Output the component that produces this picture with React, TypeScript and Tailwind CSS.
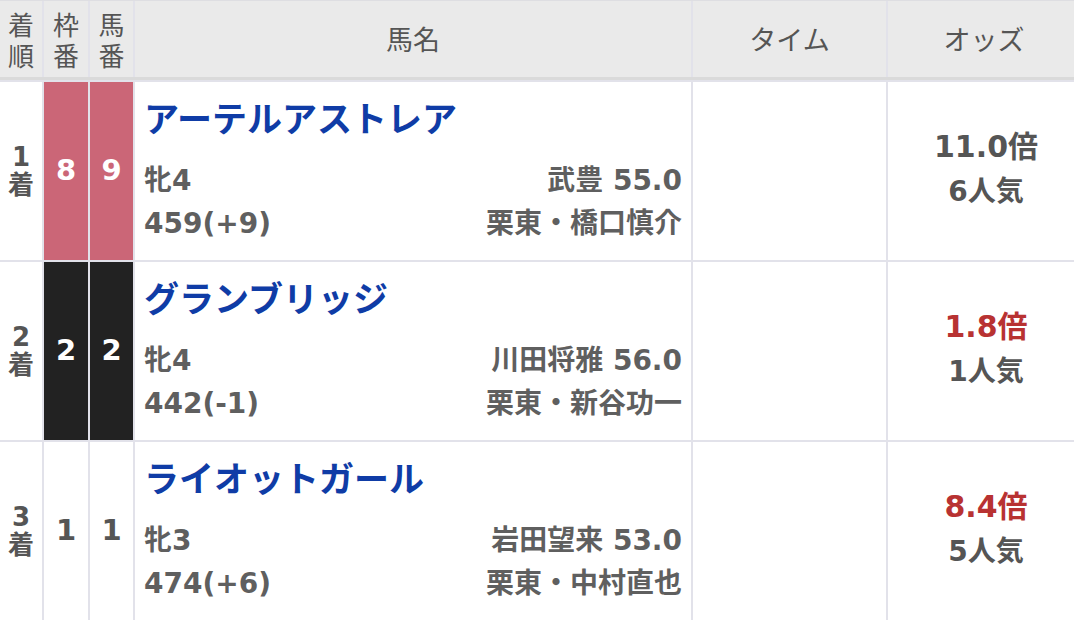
import React from "react";

type Row = {
  rank: string;
  waku: string;
  uma: string;
  wakuBg: string;
  wakuText: string;
  name: string;
  sexAge: string;
  weight: string;
  jockey: string;
  stable: string;
  trainer: string;
  odds: string;
  pop: string;
  red: boolean;
};

const rows: Row[] = [
  {
    rank: "1",
    waku: "8",
    uma: "9",
    wakuBg: "bg-[#cb6677]",
    wakuText: "text-white",
    name: "アーテルアストレア",
    sexAge: "牝4",
    weight: "459(+9)",
    jockey: "武豊 55.0",
    stable: "栗東",
    trainer: "橋口慎介",
    odds: "11.0倍",
    pop: "6人気",
    red: false,
  },
  {
    rank: "2",
    waku: "2",
    uma: "2",
    wakuBg: "bg-[#222222]",
    wakuText: "text-white",
    name: "グランブリッジ",
    sexAge: "牝4",
    weight: "442(-1)",
    jockey: "川田将雅 56.0",
    stable: "栗東",
    trainer: "新谷功一",
    odds: "1.8倍",
    pop: "1人気",
    red: true,
  },
  {
    rank: "3",
    waku: "1",
    uma: "1",
    wakuBg: "bg-white",
    wakuText: "text-[#555555]",
    name: "ライオットガール",
    sexAge: "牝3",
    weight: "474(+6)",
    jockey: "岩田望来 53.0",
    stable: "栗東",
    trainer: "中村直也",
    odds: "8.4倍",
    pop: "5人気",
    red: true,
  },
];

const cjk = { fontFamily: '"Noto Sans CJK JP", "Noto Sans", sans-serif' };
const mixed = { fontFamily: '"DejaVu Sans", "Noto Sans CJK JP", sans-serif' };

const COLS = "grid grid-cols-[42px_44px_43px_556px_193px_186px] gap-x-[2px]";

export default function App() {
  return (
    <div className="w-[1074px] h-[620px] overflow-hidden bg-white" style={cjk}>
      <div className="flex flex-col bg-[#e2e2ea] gap-y-[2px] border-t border-[#dedee2]">
        {/* header */}
        <div className={`${COLS} h-[79px] border-b-[3px] border-[#dadada]`}>
          <div className="bg-[#eaeaea] flex flex-col items-center justify-center text-[26px] leading-[31px] text-[#555555]">
            <span>着</span>
            <span>順</span>
          </div>
          <div className="bg-[#eaeaea] flex flex-col items-center justify-center text-[26px] leading-[31px] text-[#555555]">
            <span>枠</span>
            <span>番</span>
          </div>
          <div className="bg-[#eaeaea] flex flex-col items-center justify-center text-[26px] leading-[31px] text-[#555555]">
            <span>馬</span>
            <span>番</span>
          </div>
          <div className="bg-[#eaeaea] flex items-center justify-center text-[27px] text-[#555555]">馬名</div>
          <div className="bg-[#eaeaea] flex items-center justify-center text-[27px] text-[#555555]">タイム</div>
          <div className="bg-[#eaeaea] flex items-center justify-center pl-[6px] text-[27px] text-[#555555]">オッズ</div>
        </div>
        {rows.map((r) => (
          <div key={r.rank} className={`${COLS} h-[178px]`} style={mixed}>
            <div className="bg-white flex flex-col items-center justify-center text-[26px] leading-[28px] font-bold text-[#555555]">
              <span>{r.rank}</span>
              <span>着</span>
            </div>
            <div className={`${r.wakuBg} ${r.wakuText} flex items-center justify-center text-[29px] font-bold`}>
              {r.waku}
            </div>
            <div className={`${r.wakuBg} ${r.wakuText} flex items-center justify-center text-[29px] font-bold`}>
              {r.uma}
            </div>
            <div className="bg-white flex flex-col pl-[9px] pr-[9px] pt-[15px]">
              <div className="h-[40px] flex items-center text-[35px] font-bold text-[#0f3ca6]" style={cjk}>
                {r.name}
              </div>
              <div className="mt-[22px] h-[43px] flex items-center justify-between text-[28px] font-bold text-[#5f5f5f]">
                <span>{r.sexAge}</span>
                <span>{r.jockey}</span>
              </div>
              <div className="h-[43px] flex items-center justify-between text-[28px] font-bold text-[#5f5f5f]">
                <span>{r.weight}</span>
                <span>
                  {r.stable}・{r.trainer}
                </span>
              </div>
            </div>
            <div className="bg-white" />
            <div className="bg-white flex flex-col items-center justify-center pl-[10px] pb-[4px]">
              <div className={`h-[46px] flex items-center text-[30px] font-bold ${r.red ? "text-[#b83232]" : "text-[#555555]"}`}>
                {r.odds}
              </div>
              <div className="h-[46px] flex items-center text-[28px] font-bold text-[#555555]">{r.pop}</div>
            </div>
          </div>
        ))}
      </div>
    </div>
  );
}
